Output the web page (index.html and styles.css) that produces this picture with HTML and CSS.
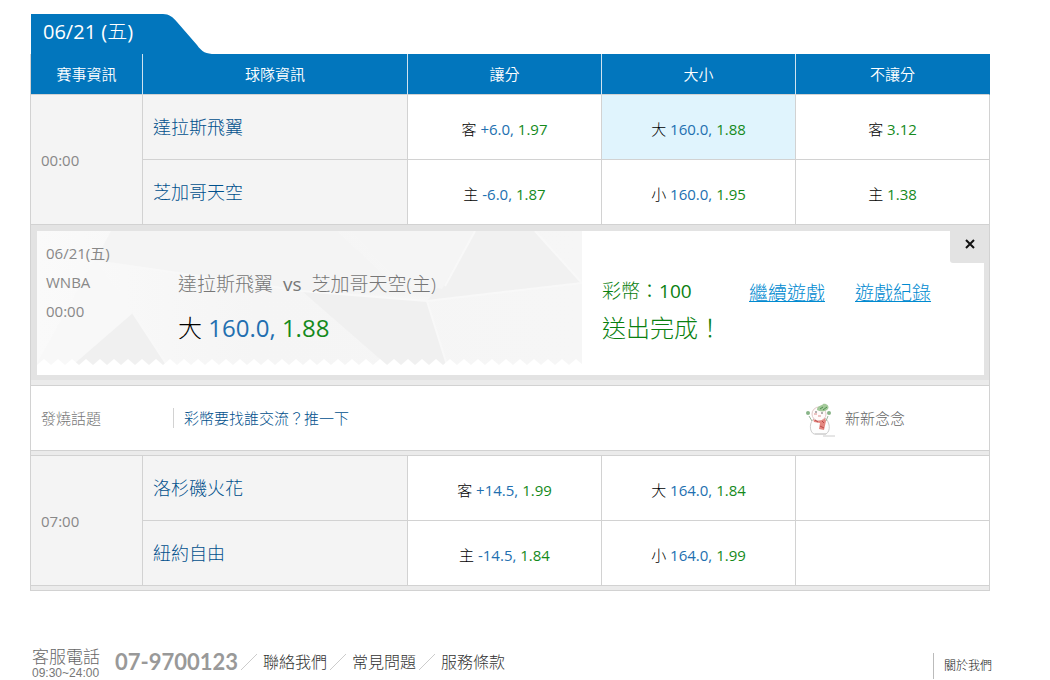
FILE: index.html
```html
<!DOCTYPE html>
<html lang="zh-Hant">
<head>
<meta charset="utf-8">
<title>06/21 WNBA</title>
<link rel="stylesheet" href="styles.css">
</head>
<body>
<main class="page">
  <section class="schedule">
    <div class="tab">
      <h1 class="tab-title"><span class="latin">06/21 (</span>五<span class="latin">)</span></h1>
      <svg class="tab-curve" width="54" height="40" viewBox="0 0 54 40" aria-hidden="true"><path d="M0 0H2C8 0 12 3 16 8L36 31C41 38 45 40 54 40H0Z" fill="#0276bd"/></svg>
    </div>
    <table class="odds-table">
      <colgroup>
        <col class="col-time"><col class="col-team"><col><col><col>
      </colgroup>
      <thead>
        <tr><th>賽事資訊</th><th>球隊資訊</th><th>讓分</th><th>大小</th><th>不讓分</th></tr>
      </thead>
      <tbody>
        <tr class="game">
          <td class="time" rowspan="2">00:00</td>
          <td class="team"><a href="#">達拉斯飛翼</a></td>
          <td class="odds">客 <span class="line">+6.0,</span> <span class="rate">1.97</span></td>
          <td class="odds selected">大 <span class="line">160.0,</span> <span class="rate">1.88</span></td>
          <td class="odds">客 <span class="rate">3.12</span></td>
        </tr>
        <tr class="game">
          <td class="team"><a href="#">芝加哥天空</a></td>
          <td class="odds">主 <span class="line">-6.0,</span> <span class="rate">1.87</span></td>
          <td class="odds">小 <span class="line">160.0,</span> <span class="rate">1.95</span></td>
          <td class="odds">主 <span class="rate">1.38</span></td>
        </tr>
        <tr>
          <td class="slip-cell" colspan="5">
            <div class="slip">
              <div class="ticket">
                <svg class="ticket-bg" viewBox="0 0 545 134" preserveAspectRatio="none" aria-hidden="true">
                  <defs>
                    <pattern id="teeth" width="14" height="6" patternUnits="userSpaceOnUse" y="128"><path d="M0 6L7 0L14 6Z" fill="#fff"/></pattern>
                    <linearGradient id="fade"><stop offset="0" stop-color="#fafafa"/><stop offset=".4" stop-color="#f5f5f5"/><stop offset="1" stop-color="#f6f6f6"/></linearGradient>
                  </defs>
                  <path d="M0 0H545V134H0Z" fill="url(#fade)"/>
                  <path d="M74 0H300L353 50L412 67L265 60L58 30Z" fill="#f4f4f4"/>
                  <path d="M0 134L58 30L96 82L36 134Z" fill="#f8f8f8"/>
                  <path d="M96 82L130 134H36Z" fill="#f0f0f0"/>
                  <path d="M265 60L390 70L410 134H350Z" fill="#f0f0f0"/>
                  <path d="M438 0H498L545 52L390 70L412 42Z" fill="#f1f1f1"/>
                  <path d="M315 0H438L405 58L360 48Z" fill="#f5f5f5"/>
                  <path d="M58 30L265 60L390 70L545 52M58 30L0 134M96 82L130 134M390 70L410 134M498 0L545 52M438 0L408 55" fill="none" stroke="#f8f8f8" stroke-width="2"/>
                  <path d="M0 128H545V134H0Z" fill="url(#teeth)"/>
                </svg>
                <ul class="ticket-info"><li>06/21(五)</li><li>WNBA</li><li>00:00</li></ul>
                <div class="ticket-bet">
                  <p class="matchup"><span>達拉斯飛翼</span><span class="latin">vs</span><span>芝加哥天空(主)</span></p>
                  <p class="pick">大 <span class="line">160.0,</span> <span class="rate">1.88</span></p>
                </div>
              </div>
              <div class="result">
                <p class="stake">彩幣：<span class="latin">100</span></p>
                <p class="done">送出完成！</p>
              </div>
              <nav class="slip-links"><a href="#">繼續遊戲</a><a href="#">遊戲紀錄</a></nav>
            </div>
            <button class="close" type="button" aria-label="關閉"><svg width="10" height="10" viewBox="0 0 10 10" aria-hidden="true"><path d="M1 1L9 9M9 1L1 9" stroke="#111" stroke-width="2"/></svg></button>
          </td>
        </tr>
        <tr><td class="strip strip-tall" colspan="5"></td></tr>
        <tr>
          <td class="topic-cell" colspan="5">
            <div class="topic">
              <span class="topic-label">發燒話題</span>
              <a class="topic-link" href="#">彩幣要找誰交流？推一下</a>
              <div class="author">
                <svg class="avatar" width="32" height="34" viewBox="0 0 32 34" aria-hidden="true">
                  <path d="M10 15C4 18 4 29 9 31H21C26 28 25 19 20 15" fill="#fdfdfd" stroke="#ccc"/>
                  <circle cx="14" cy="11" r="7" fill="#fffafa" stroke="#e0c8c8"/>
                  <path d="M12 7C12 2 17 3 18 1C21 0 25 3 23 6C21 9 15 9 12 7Z" fill="#a4c99a"/>
                  <path d="M15 6L18 4M18 7L22 4" stroke="#4c9050"/>
                  <circle cx="3" cy="10" r="2" fill="#88b488"/><circle cx="24" cy="10" r="2" fill="#88b488"/>
                  <path d="M4 13L7 18M23 13L21 18" stroke="#9bb59b"/>
                  <path d="M8 16C12 19 17 18 20 15L21 18L19 27L14 26L15 20L9 19Z" fill="#e48780"/>
                  <path d="M10 17L13 19M17 18L19 20M15 23L19 25" stroke="#b84848"/>
                  <path d="M9 11H12M13 13H16" stroke="#d98c8c"/><path d="M11 8V10M17 9V11" stroke="#666"/>
                  <path d="M10 31H21M18 33H30" stroke="#ccc"/>
                </svg>
                <span>新新念念</span>
              </div>
            </div>
          </td>
        </tr>
        <tr><td class="strip" colspan="5"></td></tr>
        <tr class="game">
          <td class="time" rowspan="2">07:00</td>
          <td class="team"><a href="#">洛杉磯火花</a></td>
          <td class="odds">客 <span class="line">+14.5,</span> <span class="rate">1.99</span></td>
          <td class="odds">大 <span class="line">164.0,</span> <span class="rate">1.84</span></td>
          <td class="odds"></td>
        </tr>
        <tr class="game">
          <td class="team"><a href="#">紐約自由</a></td>
          <td class="odds">主 <span class="line">-14.5,</span> <span class="rate">1.84</span></td>
          <td class="odds">小 <span class="line">164.0,</span> <span class="rate">1.99</span></td>
          <td class="odds"></td>
        </tr>
        <tr><td class="strip" colspan="5"></td></tr>
      </tbody>
    </table>
  </section>
  <footer class="footer">
    <div class="service"><span class="service-name">客服電話</span><span class="service-hours">09:30~24:00</span></div>
    <span class="phone">07-9700123</span>
    <nav class="footer-links">
      <svg class="slash" width="18" height="18" viewBox="0 0 18 18" aria-hidden="true"><path d="M1 17L17 1" stroke="#ccc"/></svg>
      <a href="#">聯絡我們</a>
      <svg class="slash" width="18" height="18" viewBox="0 0 18 18" aria-hidden="true"><path d="M1 17L17 1" stroke="#ccc"/></svg>
      <a href="#">常見問題</a>
      <svg class="slash" width="18" height="18" viewBox="0 0 18 18" aria-hidden="true"><path d="M1 17L17 1" stroke="#ccc"/></svg>
      <a href="#">服務條款</a>
    </nav>
    <a class="about" href="#">關於我們</a>
  </footer>
</main>
</body>
</html>
```

FILE: styles.css
```css
* { box-sizing: border-box; }

body {
  margin: 0;
  background: #fff;
  color: #000;
  font: 300 15px/20px "Open Sans", "Noto Sans CJK TC", sans-serif;
}

h1, p, ul { margin: 0; padding: 0; font-weight: inherit; }
ul { list-style: none; }
a { color: inherit; text-decoration: none; }
.latin { font-weight: 400; }

.page { padding: 14px 60px 0 30px; }

.tab { display: flex; height: 40px; padding-left: 1px; }
.tab-title {
  width: 130px;
  padding-left: 12px;
  background: #0276bd;
  color: #fff;
  font-size: 20px;
  line-height: 36px;
  white-space: nowrap;
}

.odds-table {
  width: 100%;
  table-layout: fixed;
  border-collapse: separate;
  border-spacing: 0;
}
.col-time { width: 113px; }
.col-team { width: 265px; }

th {
  height: 41px;
  padding: 0;
  background: #0276bd;
  border-right: 1px solid #cfe3f0;
  border-bottom: 1px solid #d2d2d2;
  color: #fff;
  font-weight: 350;
}
th:first-child { border-left: 1px solid #d2d2d2; }
th:last-child { border-right-color: #0276bd; }

td {
  padding: 0;
  border-right: 1px solid #d2d2d2;
  border-bottom: 1px solid #d2d2d2;
}
.game td { height: 65px; }
.time, .slip-cell, .strip, .topic-cell { border-left: 1px solid #d2d2d2; }
.game .time { padding-left: 10px; background: #f4f4f4; color: #888; font-weight: 400; }
.team { padding-left: 10px; background: #f4f4f4; color: #00508c; font-size: 18px; }
.odds { padding-top: 4px; text-align: center; }
.odds span { font-weight: 400; }
.selected { background: #e0f4fd; }
.line { color: #226fb0; }
.rate { color: #158a1c; }

.slip-cell {
  position: relative;
  padding: 6px 5px 5px 6px;
  border-bottom: 0;
  background: #e3e3e3;
}
.slip { display: flex; min-height: 144px; background: #fff; }
.ticket {
  position: relative;
  display: flex;
  flex: 0 1 545px;
  height: 134px;
}
.ticket-bg { position: absolute; inset: 0; width: 100%; height: 100%; }
.ticket-info {
  position: relative;
  width: 141px;
  padding: 8px 0 0 9px;
  color: #888;
  font-weight: 400;
  line-height: 29px;
}
.ticket-bet { position: relative; padding-top: 38px; white-space: nowrap; }
.matchup { display: flex; gap: 10px; color: #777; font-size: 19px; line-height: 30px; }
.pick { padding-top: 12px; font-size: 24px; line-height: 34px; }
.pick span { font-weight: 400; }

.result { width: 147px; padding: 44px 0 0 20px; color: #0a8010; white-space: nowrap; }
.stake { font-size: 19px; line-height: 32px; }
.done { font-size: 24px; line-height: 42px; }
.slip-links {
  display: flex;
  gap: 30px;
  padding: 46px 0 0 20px;
  color: #008ad0;
  font-size: 19px;
  line-height: 32px;
  white-space: nowrap;
}
.slip-links a { text-decoration: underline; }
.close {
  position: absolute;
  top: 6px;
  right: 0;
  display: flex;
  justify-content: center;
  width: 39px;
  height: 32px;
  padding: 8px 0 0;
  border: 0;
  border-bottom-left-radius: 3px;
  background: #e3e3e3;
}

.strip { height: 5px; background: #ebebeb; }
.strip-tall { height: 6px; }

.topic { display: flex; align-items: center; height: 64px; padding: 0 84px 0 10px; }
.topic-label { width: 132px; color: #777; }
.topic-link { padding-left: 10px; border-left: 1px solid #d2d2d2; color: #00508c; }
.author { display: flex; align-items: center; gap: 8px; margin-left: auto; color: #666; }
.avatar { margin-top: 4px; }

.footer {
  display: flex;
  align-items: center;
  margin-right: -2px;
  padding-top: 54px;
  color: #666;
  white-space: nowrap;
}
.service { display: flex; flex-direction: column; padding: 2px 0 0 2px; }
.service-name { font-size: 17px; line-height: 20px; }
.service-hours { color: #777; font: 12px/12px "Liberation Sans", sans-serif; }
.phone { padding-left: 15px; color: #999; font: 700 22px/28px Lato, sans-serif; }
.footer-links { display: flex; align-items: center; color: #333; font-size: 16px; }
.slash { margin: 0 5px 0 2px; }
.about {
  align-self: flex-end;
  margin-left: auto;
  padding-left: 10px;
  border-left: 1px solid #bbb;
  color: #222;
  font-size: 12px;
  line-height: 26px;
}
```
